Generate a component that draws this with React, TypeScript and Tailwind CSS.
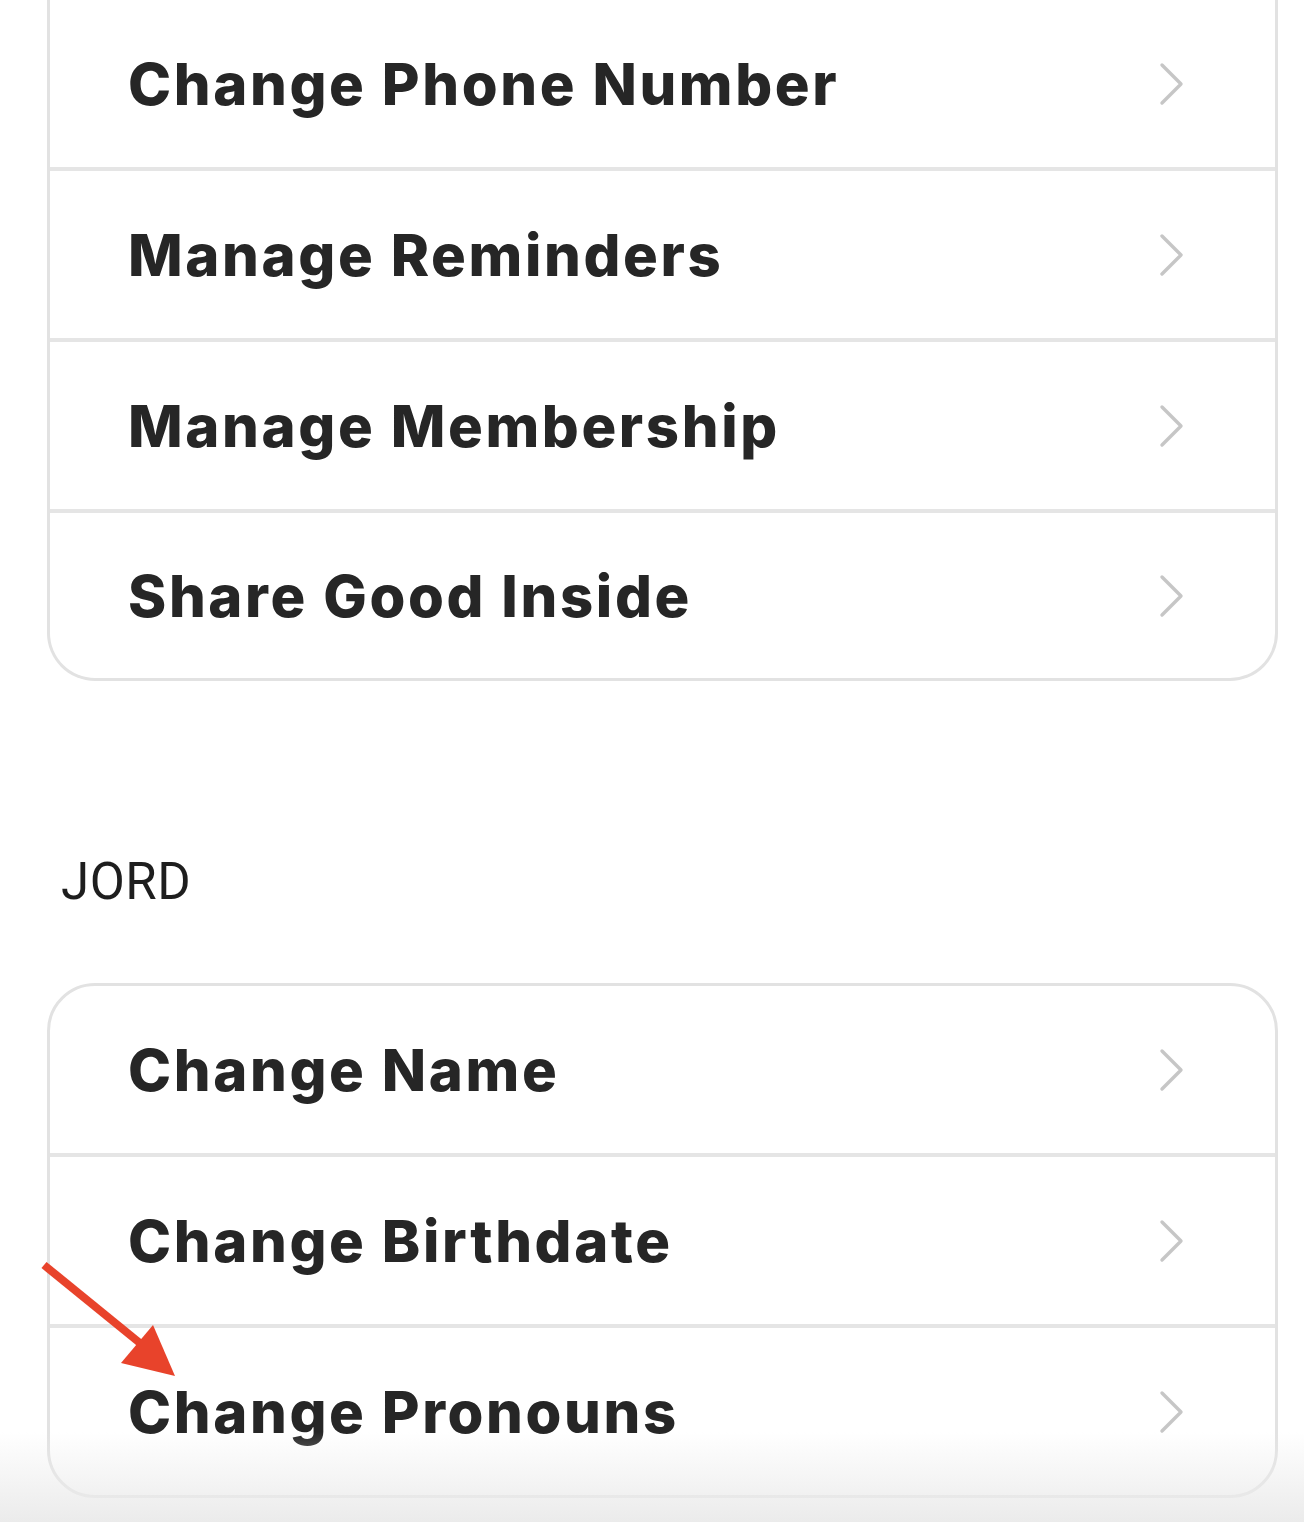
import { Fragment } from "react";

const accountItems = ["Change Phone Number", "Manage Reminders", "Manage Membership", "Share Good Inside"];
const childItems = ["Change Name", "Change Birthdate", "Change Pronouns"];

function Chevron() {
  return (
    <svg width="28" height="44" viewBox="0 0 28 44" fill="none" className="shrink-0">
      <path d="M4 3 L23 22 L4 41" stroke="#c6c6c6" strokeWidth="3.4" strokeLinecap="round" strokeLinejoin="round" />
    </svg>
  );
}

function Row({ label, h }: { label: string; h: string }) {
  return (
    <div className={`flex items-center justify-between pl-[78px] pr-[89px] ${h}`}>
      <span className="font-['Inter',sans-serif] font-extrabold text-[58px] leading-none text-[#262626] tracking-[0.045em]">
        {label}
      </span>
      <Chevron />
    </div>
  );
}

function Card({ items, top }: { items: string[]; top: boolean }) {
  return (
    <div
      className={`border-[3px] border-[#e2e2e2] bg-white ${
        top ? "rounded-[48px]" : "border-t-0 rounded-b-[48px]"
      }`}
    >
      {items.map((label, i) => (
        <Fragment key={label}>
          {i > 0 && <div className="h-[4px] bg-[#e5e5e5]" />}
          <Row label={label} h={i === items.length - 1 && !top ? "h-[165px]" : "h-[167px]"} />
        </Fragment>
      ))}
    </div>
  );
}

export default function App() {
  return (
    <div className="relative h-[1522px] overflow-hidden bg-white">
      <div className="pl-[47px] pr-[26px]">
        <Card items={accountItems} top={false} />
        <div className="pt-[172px] pb-[72px] pl-[14px] font-['Roboto',sans-serif] text-[51px] leading-[58px] tracking-[0.01em] text-[#1e1e1e]">
          JORD
        </div>
        <Card items={childItems} top />
      </div>

      {/* annotation arrow */}
      <svg className="absolute left-0 top-[1250px]" width="200" height="140" viewBox="0 1250 200 140">
        <line x1="44" y1="1265" x2="146" y2="1348" stroke="#e8432b" strokeWidth="8" />
        <polygon points="121,1363 153,1325 175,1376" fill="#e8432b" />
      </svg>

      {/* bottom fade */}
      <div className="pointer-events-none absolute inset-x-0 bottom-0 h-[90px] bg-gradient-to-b from-white/0 to-[#ebebeb]" />
    </div>
  );
}
